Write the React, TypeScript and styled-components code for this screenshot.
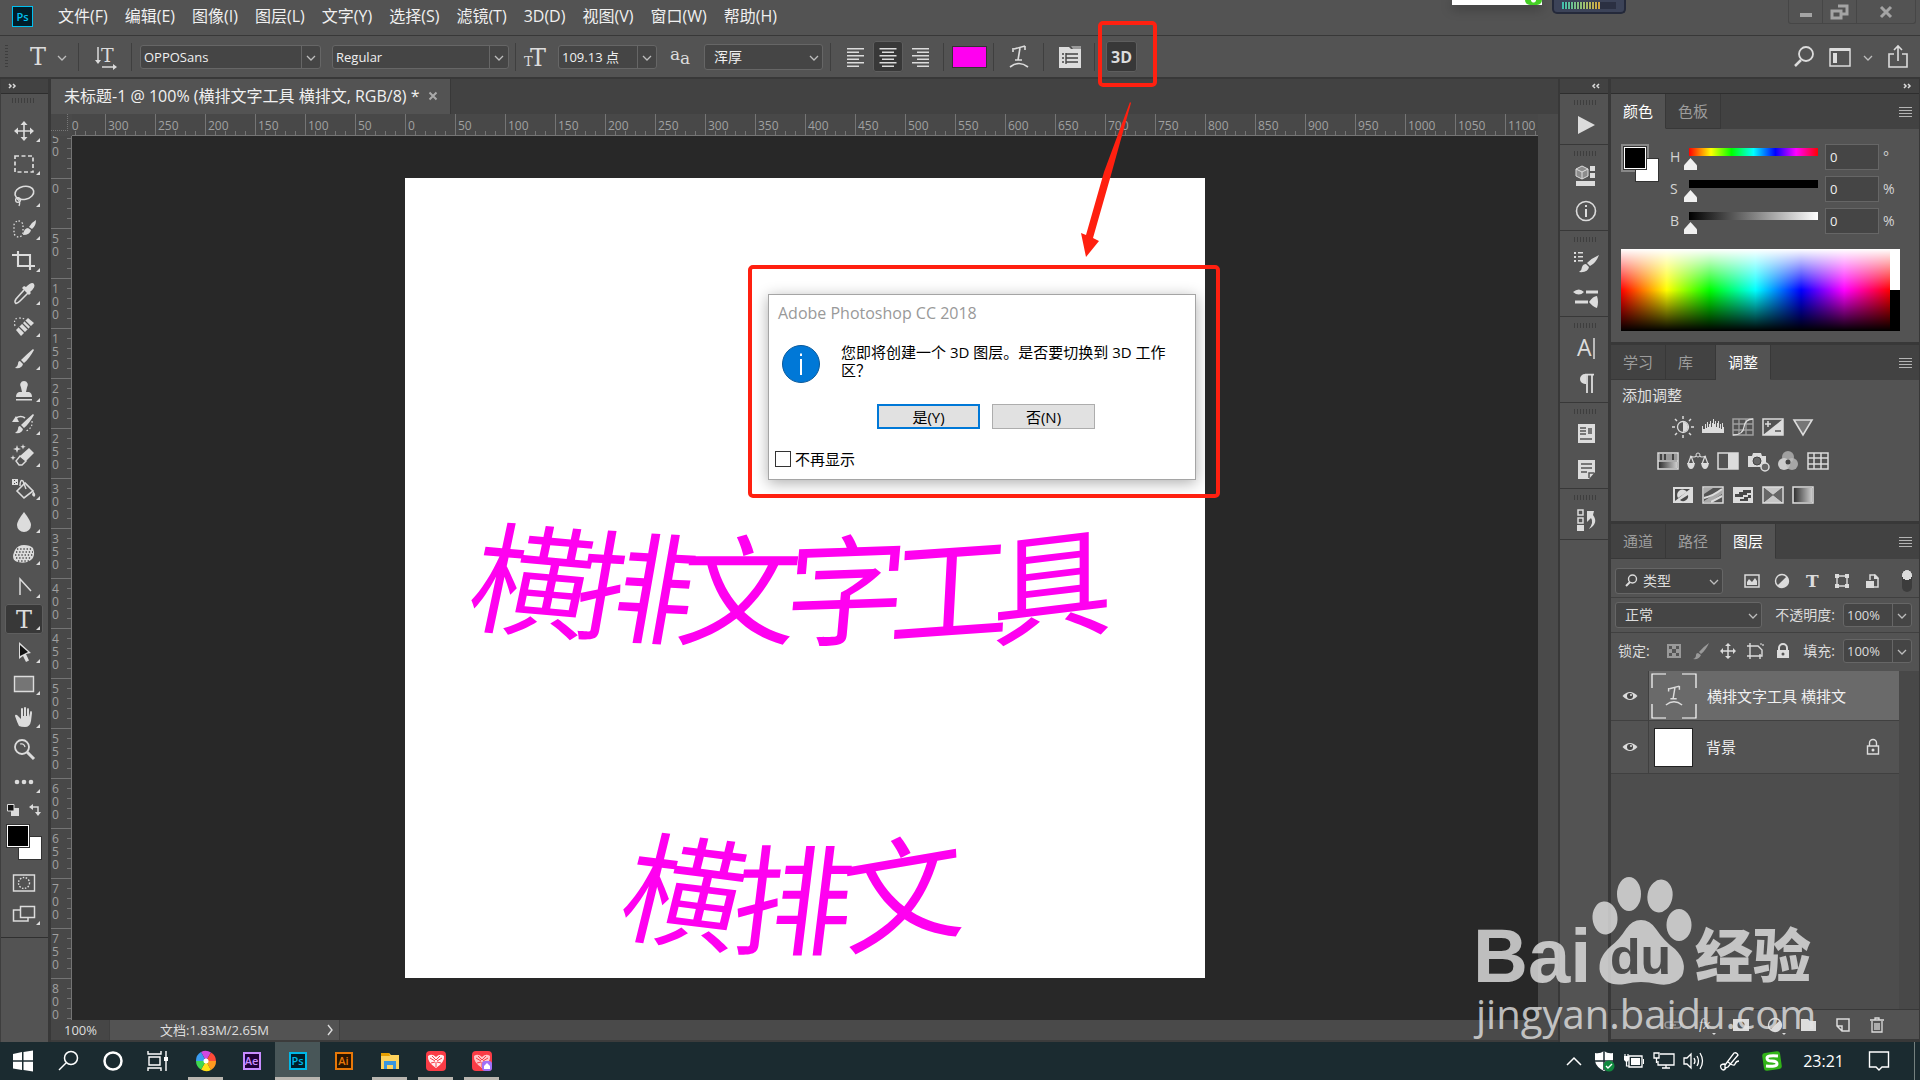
import React from "react";
import styled, { createGlobalStyle } from "styled-components";

const c = {
  bar: "#535353",
  dark: "#424242",
  line: "#383838",
  field: "#454545",
  edge: "#666666",
  icon: "#dcdcdc",
  text: "#f0f0f0",
  dim: "#a0a0a0",
  magenta: "#ff00f0",
  red: "#ff2010",
};
const sans = `"Open Sans", "Noto Sans CJK SC", sans-serif`;
const hues = "#f00, #ff0 17%, #0f0 33%, #0ff 50%, #00f 67%, #f0f 83%, #f00";

const Global = createGlobalStyle`
  * { box-sizing: border-box; }
  body { margin: 0; background: ${c.bar}; }
  button, input, select { font: inherit; color: inherit; margin: 0; padding: 0; border: 0; background: none; border-radius: 0; }
  svg { display: block; flex: none; overflow: visible; }
`;

const Root = styled.div`
  position: relative;
  display: flex;
  flex-direction: column;
  height: 100vh;
  overflow: hidden;
  font-family: ${sans};
  font-size: 15px;
  line-height: 20px;
  color: ${c.text};
  background: ${c.bar};
  white-space: nowrap;
`;

/* ---------- shared ---------- */

const Svg = ({ w = 24, h = 24, children }: { w?: number; h?: number; children: React.ReactNode }) => (
  <svg width={w} height={h} viewBox={`${-w / 2} ${-h / 2} ${w} ${h}`} fill={c.icon} stroke="none" aria-hidden="true">
    {children}
  </svg>
);
const Chevron = ({ color = "#bdbdbd" }: { color?: string }) => (
  <Svg w={10} h={10}>
    <path d="M-4 -1 0 3 4 -1" fill="none" stroke={color} strokeWidth="1.3" />
  </Svg>
);
const Stroke = ({ d, w = 1.6, dash, color = c.icon }: { d: string; w?: number; dash?: string; color?: string }) => (
  <path d={d} fill="none" stroke={color} strokeWidth={w} strokeDasharray={dash} />
);

const AppBadge = styled.span<{ $ink: string; $fill: string; $size?: number }>`
  display: grid;
  place-items: center;
  width: ${(p) => p.$size ?? 18}px;
  height: ${(p) => p.$size ?? 18}px;
  border: ${(p) => (p.$size && p.$size > 20 ? 1 : 2)}px solid ${(p) => p.$ink};
  background: ${(p) => p.$fill};
  color: ${(p) => p.$ink};
  font-size: 11px;
  line-height: 12px;
  font-weight: 600;
`;

/* ---------- menu bar ---------- */

const MenuBar = styled.header`
  display: flex;
  align-items: flex-start;
  height: 36px;
  flex: none;
  border-bottom: 1px solid ${c.line};
`;
const Brand = styled.div`
  padding: 6px 17px 0 12px;
`;
const MenuList = styled.nav`
  display: flex;
  flex: 1;
  padding-top: 4px;
`;
const MenuItem = styled.button`
  padding: 0 9px 0 8px;
  height: 24px;
  font-size: 16px;
  line-height: 24px;
`;
const Meters = styled.div`
  display: flex;
  gap: 10px;
  margin-right: 162px;
`;
const WhiteChip = styled.div`
  display: flex;
  justify-content: flex-end;
  width: 90px;
  height: 5px;
  background: #fff;
  box-shadow: 0 3px 12px rgba(0, 0, 0, 0.4);
`;
const GreenDot = styled.i`
  display: block;
  width: 17px;
  height: 5px;
  border-radius: 0 0 5px 5px;
  background: radial-gradient(circle at 50% 0, #fff 0 2px, #45cf25 3px);
`;
const Equalizer = styled.div`
  width: 74px;
  height: 14px;
  padding: 2px 8px;
  border: 2px solid #24293a;
  border-top: 0;
  border-radius: 0 0 5px 5px;
  background: #3c4358;
`;
const EqBars = styled.div`
  height: 7px;
  background: repeating-linear-gradient(90deg, transparent 0 2px, #2b3042 2px 3px),
    linear-gradient(90deg, #3fc0b0, #9cc070 40%, #d8a53c 72%, #2b3042 73%);
`;
const WindowButtons = styled.div`
  display: flex;
  height: 24px;
  margin-right: 4px;
  border: 1px solid #464646;
  border-top: 0;
  border-radius: 0 0 3px 3px;
`;
const WindowButton = styled.button<{ $wide?: boolean }>`
  display: grid;
  place-items: center;
  width: ${(p) => (p.$wide ? 58 : 34)}px;
  border-right: 1px solid #464646;
  &:last-child { border-right: 0; }
`;

/* ---------- options bar ---------- */

const OptionsBar = styled.div`
  display: flex;
  align-items: center;
  height: 43px;
  flex: none;
  padding: 0 7px 0 5px;
  border-bottom: 2px solid ${c.line};
  font-size: 13px;
`;
const Grip = styled.i<{ $vertical?: boolean }>`
  display: block;
  flex: none;
  width: ${(p) => (p.$vertical ? 3 : 24)}px;
  height: ${(p) => (p.$vertical ? 24 : 5)}px;
  background: repeating-linear-gradient(${(p) => (p.$vertical ? "180deg" : "90deg")}, #3e3e3e 0 1px, transparent 1px 3px);
`;
const Divider = styled.i<{ $l?: number; $r?: number }>`
  flex: none;
  width: 1px;
  height: 28px;
  margin: 0 ${(p) => p.$r ?? 8}px 0 ${(p) => p.$l ?? 8}px;
  background: #3f3f3f;
`;
const IconButton = styled.button<{ $w?: number; $h?: number; $on?: boolean }>`
  position: relative;
  display: grid;
  place-items: center;
  flex: none;
  width: ${(p) => p.$w ?? 30}px;
  height: ${(p) => p.$h ?? 31}px;
  border-radius: 3px;
  background: ${(p) => (p.$on ? "#383838" : "none")};
  box-shadow: ${(p) => (p.$on ? "inset 0 0 0 1px #5e5e5e" : "none")};
`;
const ToolPreset = styled.button`
  display: flex;
  align-items: center;
  justify-content: space-between;
  flex: none;
  width: 61px;
  padding: 0 2px 0 22px;
  margin-right: 1px;
`;
const Combo = styled.div<{ $w: number }>`
  display: flex;
  flex: none;
  width: ${(p) => p.$w}px;
  height: 24px;
  border: 1px solid ${c.edge};
  border-radius: 3px;
  background: ${c.field};
  font-size: 13px;
  & > input { flex: 1; min-width: 0; padding-left: 3px; }
  & > button { display: grid; place-items: center; width: 19px; border-left: 1px solid ${c.edge}; }
`;
const SelectBox = styled.div<{ $w: number; $pad?: number }>`
  display: grid;
  align-items: center;
  flex: none;
  width: ${(p) => p.$w}px;
  height: 26px;
  border: 1px solid ${c.edge};
  border-radius: 3px;
  background: ${c.field};
  font-size: 14px;
  & > * { grid-area: 1 / 1; }
  & > select { appearance: none; width: 100%; height: 24px; padding-left: ${(p) => p.$pad ?? 9}px; }
  & > svg { justify-self: end; margin-right: 3px; pointer-events: none; }
  & > svg:first-child { justify-self: start; margin-left: 8px; }
`;
const ColorSwatch = styled.button`
  flex: none;
  width: 35px;
  height: 22px;
  border: 1px solid #333;
  background: ${c.magenta};
`;
const SerifT = styled.span`
  font-family: "DejaVu Serif", serif;
  font-size: 24px;
  line-height: 24px;
  color: ${c.icon};
`;
const Spacer = styled.i<{ $w?: number }>`
  flex: ${(p) => (p.$w ? "none" : "1")};
  width: ${(p) => (p.$w ? p.$w + "px" : "auto")};
`;
const ThreeD = styled.span`
  font-size: 16px;
  font-weight: 700;
  line-height: 20px;
  color: ${c.icon};
`;

/* ---------- main frame ---------- */

const Main = styled.main`
  display: flex;
  flex: 1;
  min-height: 0;
`;
const Strip = styled.div`
  display: flex;
  align-items: center;
  justify-content: flex-end;
  flex: none;
  height: 15px;
  padding: 0 8px;
  background: ${c.dark};
  border-bottom: 1px solid #2e2e2e;
`;
const ToolColumn = styled.aside`
  display: flex;
  flex-direction: column;
  flex: none;
  width: 51px;
  border-left: 1px solid #3e3e3e;
  border-right: 3px solid #383838;
  ${Strip} { justify-content: flex-start; padding: 0 7px; }
`;
const ToolBox = styled.div`
  display: flex;
  flex-direction: column;
  align-items: center;
  padding: 4px 1px 7px 0;
  border-bottom: 1px solid #303030;
`;
const ToolGrid = styled.div`
  display: grid;
  grid-auto-rows: 1fr;
  place-items: center;
  height: 683px;
  margin-top: 12px;
`;
const SwatchTools = styled.div`
  display: flex;
  justify-content: space-between;
  width: 34px;
  height: 14px;
  margin: 6px 0;
`;
const FgBg = styled.div`
  display: grid;
  grid-template-columns: 12px 12px 12px;
  grid-template-rows: 12px 12px 12px;
  margin-bottom: 8px;
  & > button { border: 1px solid #333; }
  & > button:first-child { grid-area: 1 / 1 / 3 / 3; z-index: 1; background: #000; box-shadow: inset 0 0 0 1px #fff; }
  & > button:last-child { grid-area: 2 / 2 / 4 / 4; background: #fff; }
`;

/* ---------- document ---------- */

const Doc = styled.section`
  display: flex;
  flex-direction: column;
  flex: 1;
  min-width: 0;
`;
const TabBar = styled.div`
  display: flex;
  flex: none;
  height: 35px;
  background: ${c.dark};
`;
const DocTab = styled.div`
  display: flex;
  align-items: center;
  gap: 8px;
  padding: 0 12px 2px 13px;
  background: ${c.bar};
  border-right: 1px solid ${c.line};
  font-size: 16px;
  & > button { display: grid; }
`;
const Workspace = styled.div`
  display: grid;
  flex: 1;
  min-height: 0;
  grid-template: 22px minmax(0, 1fr) / 21px minmax(0, 1fr) 20px;
  background: #4a4a4a;
`;
const Corner = styled.i`
  background: #484848;
  border-right: 1px dotted #777;
  border-bottom: 1px dotted #777;
  margin: 0 4px 5px 0;
`;
const HRuler = styled.div`
  display: flex;
  overflow: hidden;
  background: #484848;
  border-bottom: 1px solid #747474;
  & > span {
    flex: none;
    width: 50px;
    height: 21px;
    padding: 3px 0 0 2px;
    border-left: 1px solid #747474;
    background: repeating-linear-gradient(90deg, transparent 0 9px, #747474 9px 10px) 0 100% / 50px 4px no-repeat;
    font-size: 12px;
    line-height: 18px;
    color: ${c.dim};
  }
  & > span:first-child { margin-left: -17px; }
`;
const VRuler = styled.div`
  overflow: hidden;
  background: #484848;
  border-right: 1px solid #747474;
  & > span {
    display: block;
    width: 20px;
    height: 50px;
    padding: 3px 11px 0 1px;
    border-top: 1px solid #747474;
    background: repeating-linear-gradient(180deg, transparent 0 9px, #747474 9px 10px) 100% 0 / 4px 50px no-repeat;
    font-size: 12px;
    line-height: 13px;
    white-space: normal;
    color: ${c.dim};
  }
  & > span:first-child { margin-top: -8px; }
`;
const Stage = styled.div`
  grid-area: 2 / 2;
  display: grid;
  place-content: center;
  overflow: hidden;
  background: #282828;
`;
const Artboard = styled.div`
  position: relative;
  width: 800px;
  height: 800px;
  background: #fff;
`;
const StatusBar = styled.footer`
  display: flex;
  flex: none;
  height: 22px;
  background: #4a4a4a;
  border-bottom: 2px solid #3c3c3c;
  font-size: 13px;
  color: #dedede;
`;
const Zoom = styled.input`
  width: 59px;
  padding-left: 13px !important;
  background: #464646 !important;
  border-right: 1px solid #404040 !important;
`;
const DocInfo = styled.div`
  display: flex;
  align-items: center;
  justify-content: space-between;
  width: 230px;
  padding: 0 5px 0 50px;
  background: ${c.bar};
  border-right: 1px solid #404040;
`;

/* ---------- dialog ---------- */

const Dialog = styled.form`
  position: absolute;
  left: 363px;
  top: 116px;
  display: flex;
  flex-direction: column;
  width: 428px;
  height: 186px;
  padding: 8px 6px;
  border: 1px solid #a5a5a5;
  background: #fff;
  box-shadow: 0 3px 14px rgba(0, 0, 0, 0.32);
  color: #000;
`;
const DialogTitle = styled.h1`
  margin: 0 3px;
  font-size: 16px;
  font-weight: 400;
  line-height: 20px;
  color: #999;
`;
const DialogBody = styled.div`
  display: flex;
  gap: 21px;
  margin: 20px 0 0 7px;
  & > svg { margin-top: 2px; }
  & > p { margin: 0; font-size: 15px; line-height: 18px; white-space: pre; }
`;
const DialogButtons = styled.div`
  display: flex;
  justify-content: center;
  gap: 12px;
  margin: 21px 0 20px 8px;
  & > button { width: 103px; height: 25px; border: 1px solid #adadad; background: #e1e1e1; font-size: 15px; }
  & > button:first-child { border: 2px solid #0078d7; }
`;
const CheckLabel = styled.label`
  display: flex;
  align-items: center;
  gap: 4px;
  & > input { appearance: none; width: 16px; height: 16px; border: 1px solid #333; background: #fff; }
`;

/* ---------- dock ---------- */

const Dock = styled.aside`
  display: flex;
  flex-direction: column;
  flex: none;
  width: 50px;
  border-left: 2px solid #383838;
`;
const DockGroup = styled.div`
  display: flex;
  flex-direction: column;
  align-items: center;
  gap: 5px;
  padding: 6px 0 4px 4px;
  border-bottom: 1px solid #383838;
`;

/* ---------- panels ---------- */

const Panels = styled.aside`
  display: flex;
  flex-direction: column;
  flex: none;
  width: 312px;
  border-left: 3px solid #383838;
  border-right: 1px solid #383838;
`;
const Panel = styled.section<{ $h?: number }>`
  display: flex;
  flex-direction: column;
  flex: ${(p) => (p.$h ? "none" : "1")};
  min-height: ${(p) => (p.$h ? p.$h + "px" : "0")};
  border-bottom: 3px solid #383838;
`;
const PanelTabs = styled.div`
  display: flex;
  align-items: center;
  flex: none;
  height: 35px;
  background: ${c.dark};
`;
const PanelTab = styled.button<{ $on?: boolean }>`
  min-width: 50px;
  height: 35px;
  padding: 0 12px;
  text-align: left;
  border-right: 1px solid ${c.line};
  border-bottom: 1px solid ${(p) => (p.$on ? c.bar : c.line)};
  background: ${(p) => (p.$on ? c.bar : c.dark)};
  color: ${(p) => (p.$on ? "#fff" : "#9c9c9c")};
  font-size: 15px;
`;
const PanelMenu = styled.button`
  width: 13px;
  height: 10px;
  margin: 0 7px 0 auto;
  background: repeating-linear-gradient(180deg, #b4b4b4 0 1px, transparent 1px 3px);
`;
const ColorTop = styled.div`
  display: flex;
  gap: 11px;
  padding: 15px 10px 0;
`;
const SwatchPair = styled(FgBg)`
  width: 38px;
  height: 38px;
  margin: 0;
  padding: 2px;
  background: linear-gradient(#888, #888) 0 0 / 28px 28px no-repeat;
`;
const Sliders = styled.div`
  display: flex;
  flex-direction: column;
  flex: 1;
  gap: 6px;
`;
const SliderRow = styled.div`
  display: grid;
  grid-template-columns: 19px 1fr 54px 30px;
  align-items: center;
  height: 26px;
  & > label, & > span { color: #d4d4d4; font-size: 14px; }
`;
const Range = styled.input<{ $track: string }>`
  appearance: none;
  height: 18px;
  min-width: 0;
  margin-right: 7px !important;
  background: ${(p) => p.$track} 0 0 / 100% 8px no-repeat !important;
  &::-webkit-slider-thumb {
    appearance: none;
    width: 13px;
    height: 12px;
    margin: 14px 0 0 -5px;
    background: #f0f0f0;
    clip-path: polygon(50% 0, 100% 60%, 100% 100%, 0 100%, 0 60%);
  }
`;
const NumberField = styled.input`
  width: 54px;
  height: 26px;
  padding-left: 4px !important;
  border: 1px solid ${c.edge} !important;
  background: ${c.field} !important;
  font-size: 13px !important;
`;
const Unit = styled.span`
  padding-left: 4px;
`;
const Spectrum = styled.div`
  display: flex;
  height: 82px;
  margin: 15px 19px 0 10px;
  & > i:first-child {
    flex: 1;
    background: linear-gradient(#fff, rgba(255, 255, 255, 0) 50%, rgba(0, 0, 0, 0) 50%, #000), linear-gradient(90deg, ${hues});
  }
  & > i:last-child { width: 10px; background: linear-gradient(#fff 50%, #000 50%); }
`;
const AdjustTitle = styled.p`
  margin: 5px 0 5px 11px;
  font-size: 15px;
  color: #e0e0e0;
`;
const AdjustRow = styled.div`
  display: flex;
  justify-content: center;
  height: 34px;
  padding-right: 45px;
  & > button { display: grid; place-items: center; width: 30px; height: 34px; }
`;
const LayerRowBar = styled.div<{ $top?: boolean }>`
  display: flex;
  align-items: center;
  height: ${(p) => (p.$top ? 38 : 35)}px;
  flex: none;
  padding: 0 7px ${(p) => (p.$top ? 3 : 0)}px 4px;
  border-bottom: ${(p) => (p.$top ? 0 : 1)}px solid #404040;
  font-size: 14px;
  color: #dcdcdc;
  & > label { margin-left: auto; padding-right: 8px; }
`;
const FilterBar = styled(LayerRowBar)`
  height: 39px;
  padding-top: 6px;
`;
const Toggle = styled.button`
  width: 10px;
  height: 22px;
  margin-left: auto;
  border-radius: 5px;
  background: radial-gradient(circle at 5px 5px, #dcdcdc 0 5px, #3c3c3c 5px);
`;
const LayerArea = styled.div`
  display: flex;
  flex: 1;
  min-height: 0;
  background: #4d4d4d;
`;
const LayerList = styled.ul`
  flex: 1;
  margin: 0;
  padding: 0;
  list-style: none;
`;
const LayerScroll = styled.i`
  width: 20px;
  background: #484848;
`;
const Layer = styled.li<{ $on?: boolean }>`
  display: grid;
  grid-template-columns: 38px 1fr;
  height: ${(p) => (p.$on ? 50 : 53)}px;
  border-bottom: 1px solid #404040;
  background: ${c.bar};
  & > button { display: grid; place-items: center; border-right: 1px solid #404040; }
  & > div {
    display: flex;
    align-items: center;
    gap: ${(p) => (p.$on ? 10 : 13)}px;
    padding: 0 18px 0 ${(p) => (p.$on ? 2 : 5)}px;
    background: ${(p) => (p.$on ? "#6a6a6a" : c.bar)};
    font-size: 15px;
  }
  & > div > span { flex: 1; }
`;
const Thumb = styled.i`
  width: 39px;
  height: 39px;
  border: 1px solid #222;
  background: #fff;
`;
const LayerFooter = styled.div`
  display: flex;
  justify-content: flex-end;
  align-items: center;
  flex: none;
  height: 30px;
  padding-right: 25px;
  border-top: 1px solid ${c.line};
  & > button { display: grid; place-items: center; width: 34px; }
`;

/* ---------- taskbar ---------- */

const Taskbar = styled.footer`
  display: flex;
  flex: none;
  height: 38px;
  background: #1b2b30;
  color: #fff;
`;
const AppGroup = styled.div<{ $gap?: boolean }>`
  display: flex;
  gap: ${(p) => (p.$gap ? 1 : 0)}px;
  margin-left: ${(p) => (p.$gap ? 4 : 0)}px;
  & + & { margin-left: 3px; }
`;
const AppButton = styled.button<{ $run?: boolean; $on?: boolean }>`
  display: grid;
  place-items: center;
  width: 45px;
  height: 38px;
  background: ${(p) => (p.$on ? "#485658" : "none")};
  background-image: ${(p) => (p.$run || p.$on ? "linear-gradient(#b9b6b0, #b9b6b0)" : "none")};
  background-size: ${(p) => (p.$on ? "45px" : "35px")} 3px;
  background-position: 50% 100%;
  background-repeat: no-repeat;
`;
const Tray = styled.div`
  display: flex;
  align-items: center;
  margin-left: auto;
  & > button { display: grid; place-items: center; width: 30px; height: 38px; }
`;
const Clock = styled.time`
  margin: 0 20px 0 16px;
  font-size: 16px;
`;
const Desktop = styled.i`
  align-self: stretch;
  width: 6px;
  margin-left: 20px;
  border-left: 1px solid #74807f;
`;

const Watermark = styled.svg`
  position: absolute;
  right: 100px;
  bottom: 38px;
  pointer-events: none;
`;
const Annotation = styled.svg`
  position: absolute;
  left: 740px;
  top: 10px;
  pointer-events: none;
`;

/* ---------- data ---------- */

const menus = ["文件(F)", "编辑(E)", "图像(I)", "图层(L)", "文字(Y)", "选择(S)", "滤镜(T)", "3D(D)", "视图(V)", "窗口(W)", "帮助(H)"];
const hMarks = Array.from({ length: 30 }, (_, i) => Math.abs(i * 50 - 350));
const vMarks = Array.from({ length: 18 }, (_, i) => Math.abs(i * 50 - 50));

const brush = "M9 -10 L10 -9 Q5 0 0 4 L-3 1 Q3 -5 9 -10Z M-4 2 L-1 5 Q-2 10 -9 9 Q-6 7 -6 5 Q-6 2 -4 2Z";

const tools: { name: string; plain?: boolean; art: React.ReactNode }[] = [
  { name: "移动", art: <><Stroke d="M-8 0H8M0 -8V8" /><path d="M-10 0l4-3.5v7zM10 0l-4-3.5v7zM0-10l-3.5 4h7zM0 10l-3.5-4h7z" /></> },
  { name: "矩形选框", art: <Stroke d="M-9 -8H9V8H-9Z" w={1.7} dash="4 2.5" /> },
  { name: "套索", art: <><ellipse cx="1" cy="-3" rx="9.5" ry="6.5" fill="none" stroke={c.icon} strokeWidth="1.6" transform="rotate(-12)" /><circle cx="-6" cy="4" r="2.4" fill="none" stroke={c.icon} strokeWidth="1.3" /><Stroke d="M-7 3Q-3 5-5 10" w={1.3} /></> },
  { name: "快速选择", art: <><rect x="-10" y="-8" width="9" height="16" rx="4.5" fill="none" stroke={c.icon} strokeWidth="1.3" strokeDasharray="1.5 2" /><path d="M12 -9Q12-3 8 0L5-2Q8-7 12-9ZM4-1l3 2Q6 6-1 6 0-1 4-1Z" /></> },
  { name: "裁剪", art: <Stroke d="M-6 -10V5H11M-12 -6H6V9" w={2.1} /> },
  { name: "吸管", art: <><path d="M2 -7Q8-13 10-10T6-2L7-1 5 1-2-6 0-8Z" /><Stroke d="M0 -4L-8 5Q-10 8-8 9.500Q-6 9-4 7L4 -1" w={1.6} /></> },
  { name: "污点修复", art: <><path d="M-8 4L4 -8 10 -3 -3 10Z" /><Stroke d="M-5 1L1 7M-2 -3L4 3M1 -5L7 1" w={1.2} color="#535353" /><Stroke d="M-9 0Q-11-8-5-8T0-6" w={1.2} dash="1.5 2" /></> },
  { name: "画笔", art: <path d={brush} /> },
  { name: "仿制图章", art: <path d="M0 -10a4 4 0 0 1 3 6.500L2 1H5Q8 2 8 6H-8Q-8 2-5 1H-2L-3-3.500A4 4 0 0 1 0-10ZM-8 8H8V9.500H-8Z" /> },
  { name: "历史记录画笔", art: <><path d={brush} /><path d="M-12 -2l4-6 3 6z" /><Stroke d="M-8 -6Q-3-9 1-6" /><Stroke d="M8 -3Q9 4 2 7" w={1.2} dash="1.5 2" /></> },
  { name: "魔术橡皮擦", art: <><path d="M5 -8L10 -3 2 5-4 0Z" /><path d="M-4 0L2 5-2 9H-5L-8 5Z" fill="none" stroke={c.icon} strokeWidth="1.4" /><path d="M-7-11l1 3 3 1-3 1-1 3-1-3-3-1 3-1zM-1-12l.7 2 2 .7-2 .7-.7 2-.7-2-2-.7 2-.7zM-11-1l.7 2 2 .7-2 .7-.7 2-.7-2-2-.7 2-.7z" /></> },
  { name: "油漆桶", art: <><path d="M-7 2L1-6 9 2 0 9Z" fill="none" stroke={c.icon} strokeWidth="1.6" /><Stroke d="M2 0L-1-8Q-4-10-4-3" w={1.4} /><path d="M9 2Q12 5 11 7T8 6ZM-12-10H-6V-4H-12Z" /><path d="M-10-9h1v1h-1zM-8-7h1v1h-1zM-10-6h1v1h-1z" fill="#444" /></> },
  { name: "模糊", art: <path d="M0 -10Q7 -1 7 3A7 7 0 0 1 -7 3Q-7 -1 0 -10Z" /> },
  { name: "海绵", art: <><path d="M-9-4Q-6-9 0-9T9-6Q12 2 7 6T-6 8-9-4Z" /><Stroke d="M-7-5H8M-8-2H9M-9 1H9M-8 4H8M-6 7H5" w={1.3} dash="1.3 1.9" color="#444" /></> },
  { name: "钢笔", art: <Stroke d="M-4 8V-8L7 4" w={1.5} /> },
  { name: "横排文字", art: null },
  { name: "路径选择", art: <><path d="M-5 -10V7L-1 4 2 10 5 8.500 2 2 7 1Z" /><path d="M-4 -7V4L4 0Z" fill="#111" /></> },
  { name: "矩形", art: <path d="M-9.500-7.500H9.500V7.500H-9.500Z" fill="#757575" stroke={c.icon} strokeWidth="1.4" /> },
  { name: "抓手", art: <path d="M-5 9Q-3 10 1 10 6 10 7 4L8-4Q8-6 7-6T6-4L5 0V-7Q5-9 4-9T3-7V-1H2V-9Q2-10 1-10T0-9V-1H-1V-8Q-1-9-2-9T-3-8L-3 2-7-2Q-9-3-9-1Q-7 5-5 9Z" /> },
  { name: "缩放", plain: true, art: <><circle cx="-2" cy="-2" r="7" fill="none" stroke={c.icon} strokeWidth="1.8" /><Stroke d="M3 3L10 10" w={3} /><Stroke d="M-4-5Q0-6 1-2" w={1.2} /></> },
  { name: "更多", art: <><circle cx="-7" r="2.3" /><circle r="2.300" /><circle cx="7" r="2.300" /></> },
];

const dockGroups: { name: string; art: React.ReactNode }[][] = [
  [{ name: "动作", art: <path d="M-8 -9L9 0-8 9Z" /> }],
  [
    { name: "3D", art: <><path d="M-10-7L-4-10 2-7V0L-4 3-10 0Z" fill="#8c8c8c" stroke={c.icon} /><Stroke d="M-10-7L-4-4 2-7M-4-4V3" w={1} /><path d="M4-10H9V-5H4ZM4-3H9V2H4ZM-10 5H9V10H-10Z" /></> },
    { name: "信息", art: <><circle r="9.500" fill="none" stroke={c.icon} strokeWidth="1.6" /><path d="M-1-6H1V-4H-1ZM-1-2H1V6H-1Z" /></> },
  ],
  [
    { name: "画笔设置", art: <><path d="M-12-10h2v2h-2zM-12-6h2v2h-2zM-12-2h2v2h-2zM-8-10h5v1.500h-5zM-8-6h5v1.500h-5zM-8-2h5v1.500h-5zM13-7Q10 1 4 4L1 1Q6-4 13-7ZM0 2L3 5Q2 11-7 10-4 8-4 5-3 2 0 2Z" /></> },
    { name: "画笔预设", art: <path d="M-13-5Q-7-10-2-5-7 0-13-5ZM0-6.500H12V-3.500H0ZM-11 3.500H2V6.500H-11ZM3 5Q7-1 11-1Q13 5 11 11 7 10 3 5Z" /> },
  ],
  [
    { name: "字符", art: <><text x="-9" y="8" fontSize="23" fontFamily="Open Sans, sans-serif">A</text><Stroke d="M8 -10V11" w={1.500} /></> },
    { name: "段落", art: <><path d="M7-9H-1A5 5 0 0 0-1 1H0V-9" /><Stroke d="M1 -9V10M6 -9V10M-1 -8.300H8" w={1.800} /></> },
  ],
  [
    { name: "图层复合", art: <><path d="M-8-10H9V9H-8Z" /><Stroke d="M-6-6H0M-6-3H0M-6 0H0M-6 5H6" color="#555" w={1.500} /><path d="M2-6H6V0H2Z" fill="#777" /></> },
    { name: "注释", art: <><path d="M-8-9H9V3L3 10H-8Z" /><Stroke d="M-5-5H6M-5-1H6M-5 3H1M3 9V4H8" color="#555" w={1.500} /></> },
  ],
  [{ name: "历史记录", art: <><path d="M-8-10h5v5h-5zM-8-2h5v5h-5z" fill="none" stroke={c.icon} strokeWidth="1.500" /><path d="M-9 5h7v6h-7zM1-9H8L7-5Q13 3 3 9 8 2 5-2L1 2Z" /></> }],
];

const frame = <path d="M-10-8H10V8H-10Z" fill="none" stroke={c.icon} strokeWidth="1.500" />;
const adjustments: { name: string; art: React.ReactNode }[][] = [
  [
    { name: "亮度/对比度", art: <><circle r="5.500" fill="none" stroke={c.icon} strokeWidth="1.300" /><path d="M0-5A5 5 0 0 1 0 5Z" /><Stroke d="M0-11V-8M0 8V11M-11 0H-8M8 0H11M-8-8L-6-6M6 6L8 8M-8 8L-6 6M6-6L8-8" w={1.500} /></> },
    { name: "色阶", art: <path d="M-11 6V-1H-10V2H-8V-3H-7V1H-6V-5H-5V0H-4V-3H-3V-6H-2V0H-1V-4H0V-8H1V-3H2V-6H3V0H4V-4H5V-6H6V1H7V-3H8V2H9V-4H10V0H11V6Z" /> },
    { name: "曲线", art: <><g opacity=".55">{frame}<Stroke d="M-10-3H10M-10 3H10M-4-8V8M3-8V8" w={1.300} /></g><Stroke d="M-10 8Q0 8 1 0T10-8" w={1.300} /></> },
    { name: "曝光度", art: <>{frame}<path d="M10-8V8H-10Z" /><Stroke d="M-8-3H-2M-5-6V0" w={1.500} /><Stroke d="M2 4H8" w={1.500} color="#555" /></> },
    { name: "自然饱和度", art: <path d="M-9-7H9L0 8Z" fill="#777" stroke={c.icon} strokeWidth="1.600" /> },
  ],
  [
    { name: "色相/饱和度", art: <>{frame}<path d="M-9-7H9V-1H-9Z" fill="#999" /><Stroke d="M-7-7V-1M-3-7V-1M5-7V-1" w={2} color="#444" /><path d="M-9 1H9V7H-9Z" fill="url(#fade)" /><Stroke d="M-10 0H10" w={1.300} /></> },
    { name: "色彩平衡", art: <><Stroke d="M-8-5Q-3-3-2-5M2-5Q3-3 8-5M-7-5L-10 3M-7-5L-4 3M7-5L4 3M7-5L10 3" w={1.200} /><circle cy="-6" r="2" fill="none" stroke={c.icon} /><path d="M-11 2H-3Q-4 8-7 8T-11 2ZM3 2H11Q10 8 7 8T3 2Z" /></> },
    { name: "黑白", art: <>{frame}<path d="M0-8H10V8H0Z" /></> },
    { name: "照片滤镜", art: <><path d="M-10-5H-6L-5-8H3L4-5H8V6H-10Z" /><circle cx="-1" r="4" fill="#666" stroke="#444" /><circle cx="7" cy="6" r="4" fill="#666" stroke={c.icon} strokeWidth="1.500" /></> },
    { name: "通道混合器", art: <><circle cy="-4" r="6" fill="#a0a0a0" /><circle cx="-4" cy="3" r="6" fill="#ccc" /><circle cx="4" cy="3" r="6" fill="#bbb" opacity=".8" /><circle cy="1" r="2.500" fill="#444" /></> },
    { name: "颜色查找", art: <>{frame}<Stroke d="M-10-3H10M-10 3H10M-4-8V8M3-8V8" w={1.500} /></> },
  ],
  [
    { name: "反相", art: <><path d="M-10-8H10V8H-10Z" /><path d="M-8-6H7L-8 6ZM5 0A5 5 0 0 1-3 5Z" fill="#484848" /><path d="M-5 3A5 5 0 0 1 4-3Z" /></> },
    { name: "色调分离", art: <>{frame}<path d="M-9-7H0L-9-1ZM-9 6L9-6V-1L-3 7H-9Z" fill="#aaa" /><Stroke d="M-9 3Q0 1 9-6M-2 7L9 1" w={2} /></> },
    { name: "阈值", art: <><path d="M-10-8H10V8H-10Z" /><path d="M-8 2V-1H-4V-3H0V-5H8V-2H4V0H0V2ZM-3 6V4H1V2H5V0H8V3H5V6Z" fill="#484848" /></> },
    { name: "可选颜色", art: <><path d="M-10-8L0 0 10-8ZM-10 8L0 0 10 8Z" opacity=".85" />{frame}<path d="M-9-7V7L0 0ZM9-7V7L0 0Z" fill="#666" /></> },
    { name: "渐变映射", art: <>{frame}<path d="M-9-7H9V7H-9Z" fill="url(#fade)" /></> },
  ],
];

const lockIcon = <path d="M-5-1V-3A5 5 0 0 1 5-3V-1H6V7H-6V-1ZM-3-1H3V-3A3 3 0 0 0-3-3Z" fillRule="evenodd" />;
const warpT = <><Stroke d="M-5 -8L6 -11M1 -9L-1 3M-4 3H3M-6 -5V-9M6-7V-11" w={1.600} /><Stroke d="M-9 10Q0 3 9 10" w={1.600} /></>;
const adjCircle = <><circle r="6.500" fill="none" stroke={c.icon} strokeWidth="1.400" /><path d="M4.600-4.600A6.500 6.500 0 0 1-4.600 4.600Z" /></>;
const moveSmall = <><Stroke d="M-7 0H7M0-7V7" w={1.500} /><path d="M-8 0l3-3v6zM8 0l-3-3v6zM0-8l-3 3h6zM0 8l-3-3h6z" /></>;

const alignLines = (side: number) => {
  const rows = [17, 12, 17, 12, 17, 12];
  return rows.map((w, i) => <rect key={i} x={side < 0 ? -9 : side > 0 ? 9 - w : -w / 2} y={-9 + i * 3.5} width={w} height="1.500" />);
};

const DoubleArrow = ({ flip }: { flip?: boolean }) => (
  <Svg w={8} h={8}><g transform={flip ? "scale(-1 1)" : undefined}><Stroke d="M-3-2L-1 0-3 2M1-2L3 0 1 2" w={1.500} /></g></Svg>
);

/* ---------- pieces ---------- */

const ComboField = ({ label, value, w }: { label: string; value: string; w: number }) => (
  <Combo $w={w}>
    <input aria-label={label} defaultValue={value} />
    <button type="button" aria-label={label}><Chevron /></button>
  </Combo>
);

const Slider = ({ id, unit, track }: { id: string; unit: string; track: string }) => (
  <SliderRow>
    <label htmlFor={id}>{id}</label>
    <Range id={id} type="range" min={0} max={100} defaultValue={0} $track={track} />
    <NumberField aria-label={id} defaultValue="0" />
    <Unit>{unit}</Unit>
  </SliderRow>
);

const Tabs = ({ names, active }: { names: string[]; active: string }) => (
  <PanelTabs>
    {names.map((n) => <PanelTab key={n} $on={n === active}>{n}</PanelTab>)}
    <PanelMenu aria-label="菜单" />
  </PanelTabs>
);

const Eye = () => (
  <Svg w={16} h={12}>
    <path d="M-7.500 0Q0-8 7.500 0 0 8-7.500 0Z" /><circle r="3" fill="#444" /><circle cx="1" cy="-1" r="1" />
  </Svg>
);

const Artwork = () => (
  <svg width="800" height="800" viewBox="0 0 800 800" fill={c.magenta} fontFamily="Noto Sans CJK SC, sans-serif" fontSize="120">
    <g transform="translate(0 450) skewX(-7)">
      <text x="58 164 270 378 484 588" y="-7 2 8 10 11 10" rotate="5 3 0 -2 -4 -7">横排文字工具</text>
    </g>
    <g transform="translate(0 760) skewX(-7)">
      <text x="209 324 441" y="-8 8 9" rotate="7 0 -10">横排文</text>
    </g>
  </svg>
);

const PromptDialog = () => (
  <Dialog onSubmit={(e) => e.preventDefault()}>
    <DialogTitle>Adobe Photoshop CC 2018</DialogTitle>
    <DialogBody>
      <svg width="38" height="38" viewBox="-19 -19 38 38"><circle r="18.500" fill="#0078d7" stroke="#0a5a9c" /><path d="M-1-10.500H1V-8H-1ZM-1-5H1V11H-1Z" fill="#fff" /></svg>
      <p>{"您即将创建一个 3D 图层。是否要切换到 3D 工作\n区？"}</p>
    </DialogBody>
    <DialogButtons>
      <button type="submit">是(Y)</button>
      <button type="button">否(N)</button>
    </DialogButtons>
    <CheckLabel><input type="checkbox" />不再显示</CheckLabel>
  </Dialog>
);

export default function App() {
  return (
    <Root>
      <Global />
      <MenuBar>
        <Brand><AppBadge $ink="#00c0f0" $fill="#001d29" $size={21}>Ps</AppBadge></Brand>
        <MenuList>
          {menus.map((m) => <MenuItem key={m}>{m}</MenuItem>)}
        </MenuList>
        <Meters>
          <WhiteChip><GreenDot /></WhiteChip>
          <Equalizer><EqBars /></Equalizer>
        </Meters>
        <WindowButtons>
          <WindowButton aria-label="最小化"><Svg w={14} h={14}><path d="M-6 1H6V5H-6Z" fill="#a4a4a4" /></Svg></WindowButton>
          <WindowButton aria-label="还原"><Svg w={18} h={16}><path d="M-2-6H7V2H2M-8-1H1V6H-8Z" fill="none" stroke="#a4a4a4" strokeWidth="3" /></Svg></WindowButton>
          <WindowButton aria-label="关闭" $wide><Svg w={14} h={14}><Stroke d="M-5-5L5 5M5-5L-5 5" w={3} color="#a4a4a4" /></Svg></WindowButton>
        </WindowButtons>
      </MenuBar>

      <OptionsBar>
        <Grip $vertical />
        <ToolPreset aria-label="文字工具"><SerifT>T</SerifT><Chevron /></ToolPreset>
        <Divider $r={0} $l={8} />
        <IconButton $w={52} aria-label="切换文本取向">
          <Svg w={24} h={24}><text x="-4" y="5" fontSize="19" fontFamily="DejaVu Serif, serif">T</text><Stroke d="M-7-10V4M-3 10H9" w={1.500} /><path d="M-10 3H-4L-7 7ZM8 7V13L12 10Z" /></Svg>
        </IconButton>
        <Divider $l={0} $r={8} />
        <ComboField label="字体" value="OPPOSans" w={181} />
        <Spacer $w={11} />
        <ComboField label="字体样式" value="Regular" w={177} />
        <Divider $l={6} $r={6} />
        <Svg w={30} h={26}><text x="-7" y="9" fontSize="24" fontFamily="DejaVu Serif, serif">T</text><text x="-13" y="9" fontSize="13" fontFamily="DejaVu Serif, serif">T</text></Svg>
        <Spacer $w={6} />
        <ComboField label="字号" value="109.13 点" w={99} />
        <Spacer $w={12} />
        <Svg w={22} h={24}><text x="-10" y="3" fontSize="17" fontFamily="DejaVu Serif, serif">a</text><text x="0" y="7" fontSize="17" fontFamily="DejaVu Serif, serif">a</text></Svg>
        <Spacer $w={13} />
        <SelectBox $w={119}>
          <select aria-label="消除锯齿"><option>浑厚</option></select>
          <Chevron />
        </SelectBox>
        <Divider $l={7} $r={10} />
        <IconButton aria-label="左对齐"><Svg>{alignLines(-1)}</Svg></IconButton>
        <Spacer $w={2} />
        <IconButton $on aria-label="居中对齐"><Svg>{alignLines(0)}</Svg></IconButton>
        <Spacer $w={2} />
        <IconButton aria-label="右对齐"><Svg>{alignLines(1)}</Svg></IconButton>
        <Divider $l={8} $r={8} />
        <ColorSwatch aria-label="文本颜色" />
        <Divider $l={6} $r={10} />
        <IconButton aria-label="变形文字"><Svg w={26} h={26}>{warpT}</Svg></IconButton>
        <Divider $l={9} $r={11} />
        <IconButton aria-label="字符面板">
          <Svg w={26} h={26}><path d="M-11-10H-1L1-8H11V11H-11Z" /><path d="M1-11H11V-8H3Z" fill="#999" /><Stroke d="M-8-3H-6M-4-3H8M-8 1H-6M-4 1H8M-8 5H-6M-4 5H8M-4-4V7" w={1.400} color="#444" /></Svg>
        </IconButton>
        <Divider $l={9} $r={11} />
        <IconButton $on $w={31} aria-label="3D"><ThreeD>3D</ThreeD></IconButton>
        <Spacer />
        <IconButton aria-label="搜索"><Svg w={22} h={24}><circle cx="2" cy="-3" r="7" fill="none" stroke={c.icon} strokeWidth="1.800" /><Stroke d="M-3 3L-9 9" w={2.500} /></Svg></IconButton>
        <Spacer $w={6} />
        <IconButton aria-label="工作区"><Svg w={24} h={22}><path d="M-10-8H10V9H-10Z" fill="none" stroke={c.icon} strokeWidth="1.500" /><path d="M-10-9H10V-6H-10ZM-7-4H-3V6H-7Z" /></Svg></IconButton>
        <Spacer $w={8} />
        <Chevron />
        <Spacer $w={10} />
        <IconButton aria-label="共享"><Svg w={22} h={26}><Stroke d="M-4-3H-9V10H9V-3H4M0-11V4M-4-7L0-11 4-7" w={1.600} /></Svg></IconButton>
      </OptionsBar>

      <Main>
        <ToolColumn>
          <Strip><DoubleArrow /></Strip>
          <ToolBox>
            <Grip />
            <ToolGrid>
              {tools.map((t) => (
                <IconButton key={t.name} $w={38} $h={30} $on={!t.art} aria-label={t.name}>
                  <Svg w={38} h={30}>
                    {t.art ?? <text x="-8" y="9" fontSize="24" fontFamily="DejaVu Serif, serif">T</text>}
                    {!t.plain && <path d="M16 7V11H12Z" />}
                  </Svg>
                </IconButton>
              ))}
            </ToolGrid>
            <SwatchTools>
              <Svg w={12} h={12}><path d="M-1-2H6V6H-2V0Z" /><path d="M-5.500-5.500H1V1H-5.500Z" fill="#111" stroke={c.icon} /></Svg>
              <Svg w={12} h={12}><Stroke d="M-3-3H3V4" w={1.500} /><path d="M-6-3L-2-6V0ZM0 2H6L3 6Z" /></Svg>
            </SwatchTools>
            <FgBg><button aria-label="前景色" /><button aria-label="背景色" /></FgBg>
            <IconButton $w={38} $h={30} aria-label="快速蒙版"><Svg><path d="M-10.500-8H10.500V8H-10.500Z" fill="none" stroke={c.icon} strokeWidth="1.400" /><circle r="5.500" fill="none" stroke={c.icon} strokeWidth="1.400" strokeDasharray="1.500 1.500" /></Svg></IconButton>
            <IconButton $w={38} $h={32} aria-label="屏幕模式"><Svg w={38} h={30}><Stroke d="M-4-4H-10.500V7H4V4M-3.500-7.500H10.500V3.500H-3.500Z" w={1.500} /><path d="M16 7V11H12Z" /></Svg></IconButton>
          </ToolBox>
        </ToolColumn>

        <Doc>
          <TabBar>
            <DocTab>
              未标题-1 @ 100% (横排文字工具 横排文, RGB/8) *
              <button aria-label="关闭文档"><Svg w={10} h={10}><Stroke d="M-3.500-3.500L3.500 3.500M3.500-3.500L-3.500 3.500" w={2} color="#aaa" /></Svg></button>
            </DocTab>
          </TabBar>
          <Workspace>
            <Corner />
            <HRuler>{hMarks.map((n, i) => <span key={i}>{n}</span>)}</HRuler>
            <i />
            <VRuler>{vMarks.map((n, i) => <span key={i}>{String(n).split("").join(" ")}</span>)}</VRuler>
            <Stage>
              <Artboard>
                <Artwork />
                <PromptDialog />
              </Artboard>
            </Stage>
          </Workspace>
          <StatusBar>
            <Zoom aria-label="缩放" defaultValue="100%" />
            <DocInfo>文档:1.83M/2.65M<Svg w={8} h={14}><Stroke d="M-2-5L2 0-2 5" w={1.400} /></Svg></DocInfo>
          </StatusBar>
        </Doc>

        <Dock>
          <Strip><DoubleArrow flip /></Strip>
          {dockGroups.map((g, i) => (
            <DockGroup key={i}>
              <Grip />
              {g.map((d) => <IconButton key={d.name} $w={34} $h={30} aria-label={d.name}><Svg w={28} h={26}>{d.art}</Svg></IconButton>)}
            </DockGroup>
          ))}
        </Dock>

        <Panels>
          <Strip><DoubleArrow /></Strip>
          <Panel $h={251}>
            <Tabs names={["颜色", "色板"]} active="颜色" />
            <ColorTop>
              <SwatchPair><button aria-label="前景色" /><button aria-label="背景色" /></SwatchPair>
              <Sliders>
                <Slider id="H" unit="°" track={`linear-gradient(90deg, ${hues})`} />
                <Slider id="S" unit="%" track="linear-gradient(#000, #000)" />
                <Slider id="B" unit="%" track="linear-gradient(90deg, #000, #fff)" />
              </Sliders>
            </ColorTop>
            <Spectrum><i /><i /></Spectrum>
          </Panel>
          <Panel $h={179}>
            <Tabs names={["学习", "库", "调整"]} active="调整" />
            <svg width="0" height="0">
              <defs><linearGradient id="fade"><stop offset="0" stopColor="#333" /><stop offset="1" stopColor="#ccc" /></linearGradient></defs>
            </svg>
            <AdjustTitle>添加调整</AdjustTitle>
            {adjustments.map((row, i) => (
              <AdjustRow key={i}>
                {row.map((a) => <button key={a.name} aria-label={a.name}><Svg>{a.art}</Svg></button>)}
              </AdjustRow>
            ))}
          </Panel>
          <Panel>
            <Tabs names={["通道", "路径", "图层"]} active="图层" />
            <FilterBar>
              <SelectBox $w={108} $pad={27}>
                <Svg w={14} h={14}><circle cx="1.500" cy="-2" r="4" fill="none" stroke={c.icon} strokeWidth="1.400" /><Stroke d="M-1 1L-5 5" w={2} /></Svg>
                <select aria-label="图层类型"><option>类型</option></select>
                <Chevron />
              </SelectBox>
              <Spacer $w={14} />
              <IconButton aria-label="像素图层"><Svg><path d="M-7-6H7V6H-7Z" fill="none" stroke={c.icon} strokeWidth="1.500" /><path d="M-5 4V1L-3-2 0 1 3-3 5 0V4Z" /></Svg></IconButton>
              <IconButton aria-label="调整图层"><Svg>{adjCircle}</Svg></IconButton>
              <IconButton aria-label="文字图层"><Svg><text x="-6" y="6" fontSize="17" fontWeight="700" fontFamily="DejaVu Serif, serif">T</text></Svg></IconButton>
              <IconButton aria-label="形状图层"><Svg><path d="M-5-5H5V5H-5Z" fill="none" stroke={c.icon} strokeWidth="1.400" /><path d="M-7-7h4v4h-4zM3-7h4v4h-4zM-7 3h4v4h-4zM3 3h4v4h-4z" /></Svg></IconButton>
              <IconButton aria-label="智能对象"><Svg><Stroke d="M-2-1V-6H3L6-3V6H2" w={1.500} /><path d="M-6 0H2V7H-6ZM2-7L7-2H2Z" /></Svg></IconButton>
              <Toggle aria-label="滤镜开关" />
            </FilterBar>
            <LayerRowBar>
              <SelectBox $w={147}>
                <select aria-label="混合模式"><option>正常</option></select>
                <Chevron />
              </SelectBox>
              <label>不透明度:</label>
              <ComboField label="不透明度" value="100%" w={69} />
            </LayerRowBar>
            <LayerRowBar $top>
              <Spacer $w={3} />
              锁定:
              <Spacer $w={10} />
              <IconButton $w={28} aria-label="锁定透明像素"><Svg w={16} h={16}><path d="M-7-7H7V7H-7Z" fill="#999" /><path d="M-5-5h3v3h-3zM2-5h3v3h-3zM-2-2h4v4h-4zM-5 2h3v3h-3zM2 2h3v3h-3z" fill="#555" /></Svg></IconButton>
              <IconButton $w={27} aria-label="锁定图像像素"><Svg w={20} h={20}><path d="M8-8Q5-1 0 3L-2 1Q2-4 8-8ZM-3 2L0 4Q-2 9-8 8-5 7-5 4-5 2-3 2Z" fill="#999" /></Svg></IconButton>
              <IconButton $w={27} aria-label="锁定位置"><Svg w={20} h={20}>{moveSmall}</Svg></IconButton>
              <IconButton $w={27} aria-label="防止嵌套"><Svg w={20} h={20}><Stroke d="M-8-5H3L7-1V5H-8M-5-8V8M5 3V8" w={1.400} /><Stroke d="M5-7H8V-4" w={1.200} dash="2 1" /></Svg></IconButton>
              <IconButton $w={28} aria-label="锁定全部"><Svg w={16} h={18}>{lockIcon}<circle cy="3" r="1.500" fill="#555" /></Svg></IconButton>
              <label>填充:</label>
              <ComboField label="填充" value="100%" w={69} />
            </LayerRowBar>
            <LayerArea>
              <LayerList>
                <Layer $on>
                  <button aria-label="可见性"><Eye /></button>
                  <div>
                    <Svg w={46} h={46}><Stroke d="M-22-8V-22H-8M8-22H22V-8M22 8V22H8M-8 22H-22V8" w={1.200} color="#fff" /><g transform="scale(.9)">{warpT}</g></Svg>
                    <span>横排文字工具 横排文</span>
                  </div>
                </Layer>
                <Layer>
                  <button aria-label="可见性"><Eye /></button>
                  <div>
                    <Thumb />
                    <span>背景</span>
                    <Svg w={16} h={18}><path d="M-5.500-1H5.500V7H-5.500ZM-3.500-1V-4A3.500 3.500 0 0 1 3.500-4V-1" fill="none" stroke={c.icon} strokeWidth="1.400" /><circle cy="3" r="1.500" /></Svg>
                  </div>
                </Layer>
              </LayerList>
              <LayerScroll />
            </LayerArea>
            <LayerFooter>
              <button aria-label="链接图层"><Svg><g opacity=".5"><Stroke d="M-1-3H-5A3 3 0 0 0-5 3H-1M1-3H5A3 3 0 0 1 5 3H1M-3 0H3" w={1.400} /></g></Svg></button>
              <button aria-label="图层样式"><Svg><text x="-8" y="4" fontSize="15" fontStyle="italic" fontFamily="Liberation Serif, serif">fx</text><path d="M5 8H9L7 10Z" /></Svg></button>
              <button aria-label="添加蒙版"><Svg><path d="M-8-6H8V6H-8Z" /><circle r="3.500" fill="#555" /></Svg></button>
              <button aria-label="新建调整图层"><Svg>{adjCircle}<path d="M7 8H11L9 10Z" /></Svg></button>
              <button aria-label="新建组"><Svg><path d="M-8-6H-1L1-4H7V6H-8Z" /></Svg></button>
              <button aria-label="新建图层"><Svg><Stroke d="M-6-6H6V6H-1L-6 1ZM-6 1H-1V6" w={1.500} /></Svg></button>
              <button aria-label="删除图层"><Svg><Stroke d="M-7-5H7M-2-5V-7H2V-5M-5-4V7H5V-4M-2-2V5M0-2V5M2-2V5" w={1.300} /></Svg></button>
            </LayerFooter>
          </Panel>
        </Panels>
      </Main>

      <Taskbar>
        <AppGroup>
          <AppButton aria-label="开始"><Svg><path d="M-10-7L-1-9V-.7H-10ZM.500-9L10-10.500V-.700H.500ZM-10 .700H-1V9L-10 7.500ZM.500 .700H10V10.500L.500 9Z" fill="#fff" /></Svg></AppButton>
          <AppButton aria-label="搜索"><Svg><circle cx="3" cy="-3" r="6.500" fill="none" stroke="#fff" strokeWidth="1.500" /><Stroke d="M-2 2L-9 9" w={1.500} color="#fff" /></Svg></AppButton>
          <AppButton aria-label="Cortana"><Svg><circle r="8.500" fill="none" stroke="#fff" strokeWidth="2.500" /></Svg></AppButton>
          <AppButton aria-label="任务视图"><Svg><Stroke d="M-10-10V-7H3V-10M-10 10V7H3V10M-9-4H2V4H-9ZM8-10V10" w={1.400} color="#fff" /><path d="M6-4H10V0H6Z" fill="#fff" /></Svg></AppButton>
        </AppGroup>
        <AppGroup $gap>
          <AppButton $run aria-label="浏览器">
            <Svg><path d="M0 0L-5-9A10 10 0 0 1 5-8.500Z" fill="#d048e0" /><path d="M0 0L5-8.500A10 10 0 0 1 10 0Z" fill="#ff4a38" /><path d="M0 0L10 0A10 10 0 0 1 5 9Z" fill="#ff9a20" /><path d="M0 0L5 9A10 10 0 0 1-5 8.500Z" fill="#ffe018" /><path d="M0 0L-5 8.500A10 10 0 0 1-10 0Z" fill="#3ed850" /><path d="M0 0L-10 0A10 10 0 0 1-5-9Z" fill="#3a9cf0" /><circle r="2.500" fill="#fff" /></Svg>
          </AppButton>
          <AppButton aria-label="After Effects"><AppBadge $ink="#c88cff" $fill="#1f0038">Ae</AppBadge></AppButton>
          <AppButton $on aria-label="Photoshop"><AppBadge $ink="#00b8e8" $fill="#001d29">Ps</AppBadge></AppButton>
          <AppButton aria-label="Illustrator"><AppBadge $ink="#e87808" $fill="#281400">Ai</AppBadge></AppButton>
          <AppButton $run aria-label="文件资源管理器"><Svg><path d="M-9-8H-1L1-6H9V8H-9Z" fill="#ffd35c" /><path d="M-9-8H-1L0-5H-9Z" fill="#e8a000" /><path d="M-6 8V0H6V8H3V4H-3V8Z" fill="#3a96dd" /></Svg></AppButton>
          {[false, true].map((home) => (
            <AppButton key={String(home)} $run aria-label={home ? "管家" : "加速器"}>
              <Svg><rect x="-10" y="-10" width="20" height="20" rx="4" fill="#fa3c46" /><path d="M0 7Q-9 1-8-5-4-8 0-4 4-8 8-5 9 1 0 7Z" fill="#fff" opacity={home ? ".7" : ".92"} /><Stroke d="M-6-3L-1 0M6-3L1 0M0 1V6M-4-5L0-1 4-5M-5 2L-1 1M5 2L1 1" w={1} color="#fa3c46" />{home && <><rect x="0" y="0" width="10" height="10" rx="3" fill="#a070f8" /><path d="M2 5L5 2 8 5V8H2Z" fill="#fff" /></>}</Svg>
            </AppButton>
          ))}
        </AppGroup>
        <Tray>
          <button aria-label="显示隐藏的图标"><Svg><Stroke d="M-7 4L0-3 7 4" w={1.500} color="#fff" /></Svg></button>
          <button aria-label="安全中心"><Svg><path d="M-9-8Q-4-7 0-10 4-7 9-8V0Q8 6 0 10-8 6-9 0Z" fill="#fff" /><Stroke d="M0-10V9M-9 0H9" w={1.500} color="#1b2b30" /><circle cx="5" cy="5" r="5.500" fill="#10893e" /><Stroke d="M2 5L4 7 8 3" w={1.400} color="#fff" /></Svg></button>
          <button aria-label="电池"><Svg><Stroke d="M-5-5H8V6H-5Z" w={1.300} color="#fff" /><path d="M-3-3H6V4H-3ZM9-2H10V3H9ZM-10-5H-5V-1L-7 1H-8L-10-1Z" fill="#fff" /><Stroke d="M-9-7V-5M-6-7V-5M-7.500 1V5H-5" w={1.200} color="#fff" /></Svg></button>
          <button aria-label="网络"><Svg><Stroke d="M-4-7H10V4H-6V0M-2 7H6M2 4V7M-10-8H-5V-3H-10ZM-7.500-3V2" w={1.300} color="#fff" /></Svg></button>
          <button aria-label="音量"><Svg><Stroke d="M-10-3H-7L-3-7V7L-7 3H-10ZM0-3Q2 0 0 3M3-5Q6 0 3 5M6-8Q11 0 6 8" w={1.300} color="#fff" /></Svg></button>
          <Spacer $w={6} />
          <button aria-label="手写笔"><Svg><Stroke d="M-5 4L4-8Q7-9 8-6L-2 6-5 7ZM-5 3Q-11 3-9 7T-4 7M-2 1Q4 6 5 3T9 0" w={1.300} color="#fff" /></Svg></button>
          <Spacer $w={12} />
          <button aria-label="输入法"><Svg><rect x="-9" y="-9" width="18" height="18" rx="3" fill="#32b418" transform="rotate(-8)" /><Stroke d="M6-5Q-5-6-5-3T0 0 5 3-6 5" w={3} color="#fff" /></Svg></button>
          <Clock>23:21</Clock>
          <button aria-label="通知"><Svg><Stroke d="M-9.500-9H9.500V6H3L0 9-3 6H-9.500Z" w={1.400} color="#fff" /></Svg></button>
          <Desktop />
        </Tray>
      </Taskbar>

      <Annotation width="490" height="496" viewBox="740 10 490 496" fill="none" stroke={c.red}>
        <rect x="1100" y="23" width="55" height="62" rx="3" strokeWidth="4" />
        <rect x="750" y="267" width="468" height="229" rx="3" strokeWidth="4" />
        <path d="M1130 102L1104 172 1086 235 1081 233 1086 257 1099 241 1093 238 1111 175 1131 103Z" fill={c.red} stroke="none" />
      </Annotation>

      <Watermark width="350" height="172" viewBox="1470 870 350 172" fill="#e4e4e4" fillOpacity=".8">
        <text x="1473" y="982" fontFamily="Liberation Sans, sans-serif" fontWeight="700" fontSize="76">Bai</text>
        <ellipse cx="1605" cy="918" rx="12.500" ry="16.500" transform="rotate(-5 1605 918)" />
        <ellipse cx="1629" cy="894" rx="12" ry="17" />
        <ellipse cx="1660" cy="896" rx="12.500" ry="16.500" transform="rotate(10 1660 896)" />
        <ellipse cx="1679" cy="925" rx="12.500" ry="16" />
        <path d="M1641 920Q1650 920 1656 929 1664 941 1675 949 1688 962 1682 976 1674 987 1657 984 1641 980 1625 984 1605 987 1600 972 1597 958 1611 946 1619 940 1626 929 1632 920 1641 920Z" />
        <text x="1610" y="974" fontFamily="Liberation Sans, sans-serif" fontWeight="700" fontSize="50" fill="#4d4d4d" fillOpacity="1">du</text>
        <text x="1695" y="977" fontFamily="Noto Sans CJK SC, sans-serif" fontWeight="900" fontSize="58">经验</text>
        <text x="1476" y="1029" fontFamily="Open Sans, sans-serif" fontWeight="500" fontSize="40">jingyan.baidu.com</text>
      </Watermark>
    </Root>
  );
}
